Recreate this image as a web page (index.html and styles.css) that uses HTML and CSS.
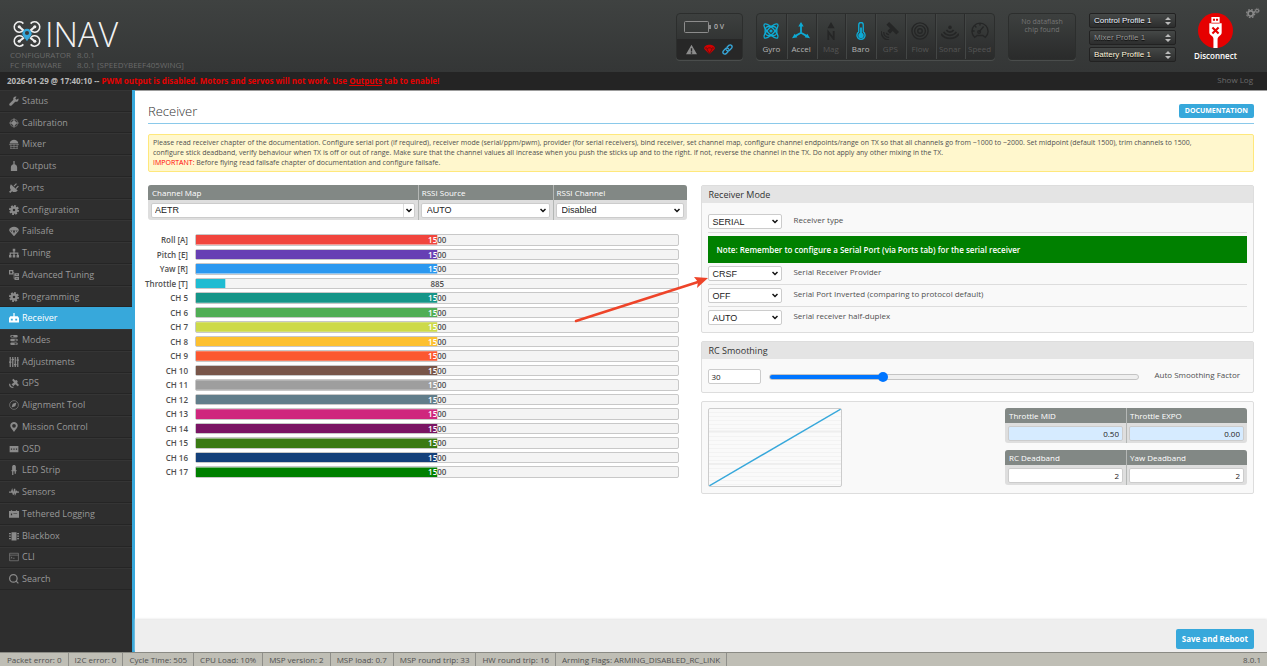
FILE: index.html
```
<!DOCTYPE html>
<html lang="en">
<head>
    <meta charset="UTF-8">
    <meta name="viewport" content="width=device-width, initial-scale=1.0">
    <title>INAV Configurator</title>
    <link rel="stylesheet" href="styles.css">
</head>
<body>
    <header class="header">
        <div class="brand">
            <div class="logo">
                <svg class="logo-mark" viewBox="0 0 54 54" fill="none" stroke="#eeeeee" stroke-width="3">
                    <path d="M20 7a10 10 0 1 0-1 14M34 7a10 10 0 1 1 1 14M20 47a10 10 0 1 1-1-14M34 47a10 10 0 1 0 1-14"/>
                    <path d="M12 13l9 8M42 13l-9 8M12 41l9-7M42 41l-9-7" stroke-width="4"/>
                    <circle cx="12" cy="13" r="3" fill="#eee" stroke="none"/>
                    <circle cx="42" cy="13" r="3" fill="#eee" stroke="none"/>
                    <circle cx="12" cy="41" r="3" fill="#eee" stroke="none"/>
                    <circle cx="42" cy="41" r="3" fill="#eee" stroke="none"/>
                    <path fill-rule="evenodd" d="M27 41c-5-8-9-10-9-15a9 9 0 0 1 18 0c0 5-4 7-9 15zM27 21a4 4 0 1 0 0 8 4 4 0 0 0 0-8z" fill="#37a8db" stroke="none"/>
                </svg>
                <span class="logo-text">INAV</span>
            </div>
            <dl class="versions">
                <dt>CONFIGURATOR</dt><dd>8.0.1</dd>
                <dt>FC FIRMWARE</dt><dd>8.0.1 [SPEEDYBEEF405WING]</dd>
            </dl>
        </div>

        <div class="battery-box">
            <div class="battery">
                <svg class="battery-icon" viewBox="0 0 27 12" fill="none" stroke="#8c8c8c"><rect x="0.500" y="0.500" width="24" height="11" rx="1"/><path d="M26 4v4" stroke-width="2"/></svg>
                <span>0 V</span>
            </div>
            <div class="battery-status">
                <svg viewBox="0 0 16 16" fill="#8c8c8c"><path fill-rule="evenodd" d="M8 1l8 14H0zM7 6v5h2V6zM7 12v2h2v-2z"/></svg>
                <svg viewBox="0 0 16 16"><path d="M0 7c0-8 16-8 16 0L8 15z" fill="#d40000"/><path d="M4 7l4 7 4-7M1 7c2-2 3-2 4 0 1-2 5-2 6 0 1-2 2-2 4 0" fill="none" stroke="#441515"/></svg>
                <svg viewBox="0 0 16 16" fill="none" stroke="#37a8db" stroke-width="2"><path d="M7 5l3-3c3-2 6 1 4 4l-3 3c-2 2-4 1-5-1M9 11l-3 3c-3 2-6-1-4-4l3-3c2-2 4-1 5 1"/></svg>
            </div>
        </div>

        <ul class="sensors">
            <li class="on"><svg viewBox="0 0 20 20" fill="none" stroke="currentColor" stroke-width="1.500"><ellipse cx="10" cy="10" rx="3.500" ry="10.500" transform="rotate(45 10 10)"/><ellipse cx="10" cy="10" rx="3.500" ry="10.500" transform="rotate(-45 10 10)"/><rect x="3.500" y="5" width="13" height="10" rx="4"/><circle cx="10" cy="10" r="1"/></svg>Gyro</li>
            <li class="on"><svg viewBox="0 0 20 20" fill="none" stroke="currentColor" stroke-width="2"><path d="M10 12V3M10 12l-7 4M10 12l7 4"/><path d="M10 0l3 5H7zM0 18l3-5 3 4zM20 18l-3-5-3 4z" fill="currentColor" stroke="none"/></svg>Accel</li>
            <li><svg viewBox="0 0 20 20" fill="none" stroke="currentColor" stroke-width="2"><path d="M10 0l4 7H6z" fill="currentColor" stroke="none"/><path d="M7 20v-9l6 8v-9"/></svg>Mag</li>
            <li class="on"><svg viewBox="0 0 20 20" fill="none" stroke="currentColor" stroke-width="1.500"><path d="M7.500 11V3a2.500 2.500 0 0 1 5 0v8a4.500 4.500 0 1 1-5 0z"/><circle cx="10" cy="15" r="3" fill="currentColor" stroke="none"/><path d="M10 15V6" stroke-width="2"/></svg>Baro</li>
            <li><svg viewBox="0 0 20 20" fill="currentColor"><path d="M9 0l4 4-3 3-4-4zM16 7l4 4-3 3-4-4zM13 4l3 3-6 6-3-3z"/><path d="M6 12c0 1 1 2 3 2M3 11c0 4 3 6 6 6M0 10c0 6 4 10 9 10" fill="none" stroke="currentColor" stroke-width="1.500"/></svg>GPS</li>
            <li><svg viewBox="0 0 20 20" fill="none" stroke="currentColor" stroke-width="1.500"><circle cx="10" cy="10" r="9"/><circle cx="10" cy="10" r="6"/><circle cx="10" cy="10" r="2.500"/></svg>Flow</li>
            <li><svg viewBox="0 0 20 20" fill="none" stroke="currentColor" stroke-width="2"><circle cx="10" cy="6" r="2" fill="currentColor" stroke="none"/><path d="M6 9c2 3 6 3 8 0M3 11c3 5 11 5 14 0M0 13c4 7 16 7 20 0"/></svg>Sonar</li>
            <li><svg viewBox="0 0 20 20" fill="none" stroke="currentColor" stroke-width="1.500"><path d="M4 17a9 9 0 1 1 12 0l-3-2H7zM9 11l5-6M10 1v3M1 10h3M4 4l2 2"/><circle cx="9" cy="11" r="1.500"/></svg>Speed</li>
        </ul>

        <div class="dataflash">No dataflash<br>chip found</div>

        <div class="profiles">
            <select aria-label="Control profile"><option>Control Profile 1</option></select>
            <select class="dim" aria-label="Mixer profile"><option>Mixer Profile 1</option></select>
            <select class="battery-profile" aria-label="Battery profile"><option>Battery Profile 1</option></select>
        </div>

        <button type="button" class="connect">
            <svg viewBox="0 0 34 34"><circle cx="17" cy="17" r="17" fill="#e60000"/><path d="M13 4h8v6h2v9c0 3-3 3-4 6v9h-4v-9c0-3-4-3-4-6v-9h2z" fill="#fff"/><path d="M14.500 5.500h2v2h-2zM17.500 5.500h2v2h-2zM13 9.500h8v.8h-8z" fill="#e60000"/><path d="M14 14l6 6M20 14l-6 6" stroke="#e60000" stroke-width="2"/></svg>
            Disconnect
        </button>

        <button type="button" class="options" aria-label="Options">
            <svg viewBox="0 0 24 18" fill="none" stroke="#888"><circle cx="8" cy="10" r="4.500" stroke-width="3"/><circle cx="8" cy="10" r="7" stroke-width="2" stroke-dasharray="3 2.500"/><circle cx="19" cy="5" r="2.500" stroke-width="2"/><circle cx="19" cy="5" r="4" stroke-dasharray="2 1"/></svg>
        </button>
    </header>

    <div class="log">
        <p>2026-01-29 @ 17:40:10 -- <span class="log-error">PWM output is disabled. Motors and servos will not work. Use <a href="#outputs">Outputs</a> tab to enable!</span></p>
        <a href="#log" class="show-log">Show Log</a>
    </div>

    <div class="main">
        <nav class="sidebar">
            <ul>
                <li><a href="#status"><svg viewBox="0 0 16 16"><path d="M15 4l-3 2-2-2 2-3c-4-1-6 2-5 5l-6 6c-2 2 1 5 3 3l6-6c3 1 6-1 5-5z"/></svg>Status</a></li>
                <li><a href="#calibration"><svg viewBox="0 0 16 16"><path d="M8 0v16M0 8h16" class="line"/><circle cx="8" cy="8" r="6" class="line"/><path d="M8 3L3 8l5 5 5-5z"/></svg>Calibration</a></li>
                <li><a href="#mixer"><svg viewBox="0 0 16 16"><path d="M1 7c1-8 13-8 14 0z"/><path d="M0 9h16M2 12h12M2 15h12M3 8v8M8 8v8M13 8v8" class="line"/></svg>Mixer</a></li>
                <li><a href="#outputs"><svg viewBox="0 0 16 16"><path d="M7 0h2v5c3 1 4 3 4 5v6H3v-6c0-2 1-4 4-5z"/></svg>Outputs</a></li>
                <li><a href="#ports"><svg viewBox="0 0 16 16"><path d="M3 2l11 10c-3 3-7 3-9 1l-3 3-2-2 3-3C1 9 1 5 3 2z"/><path d="M8 5l4-4M11 9l4-4" class="bold"/></svg>Ports</a></li>
                <li><a href="#configuration"><svg viewBox="0 0 16 16"><circle cx="8" cy="8" r="4" class="thick"/><circle cx="8" cy="8" r="6.500" class="teeth"/></svg>Configuration</a></li>
                <li><a href="#failsafe"><svg viewBox="0 0 16 16"><path d="M0 7c1-8 15-8 16 0z"/><path d="M1 7l7 8 7-8M5 7l3 8 3-8" class="bold"/></svg>Failsafe</a></li>
                <li><a href="#tuning"><svg viewBox="0 0 16 16"><path d="M6 1h4v4H6zM0 11h4v4H0zM6 11h4v4H6zM12 11h4v4h-4z"/><path d="M8 4v8M2 12V8h12v4" class="bold"/></svg>Tuning</a></li>
                <li><a href="#advanced"><svg viewBox="0 0 16 16"><path d="M1 1h5v5H1zM10 6h5v3h-5zM10 12h5v3h-5z" class="bold"/><path d="M6 4h2v10h2M8 8h2" class="line"/></svg>Advanced Tuning</a></li>
                <li><a href="#programming"><svg viewBox="0 0 16 16"><circle cx="8" cy="8" r="4" class="thick"/><circle cx="8" cy="8" r="6.500" class="teeth"/></svg>Programming</a></li>
                <li class="active"><a href="#receiver"><svg viewBox="0 0 16 16"><path fill-rule="evenodd" d="M7 0h2v5h5l2 3v7H0V8l2-3h5zM3 9v3h3V9zM10 9v3h3V9z"/></svg>Receiver</a></li>
                <li><a href="#modes"><svg viewBox="0 0 16 16"><path fill-rule="evenodd" d="M4 0h8a2 2 0 0 1 0 4H4a2 2 0 0 1 0-4zM4 6h8a2 2 0 0 1 0 4H4a2 2 0 0 1 0-4zM4 12h8a2 2 0 0 1 0 4H4a2 2 0 0 1 0-4zM4 1v2h3V1zM9 7v2h3V7zM9 13v2h3v-2z"/></svg>Modes</a></li>
                <li><a href="#adjustments"><svg viewBox="0 0 16 16"><path d="M2 0v16M6 0v16M10 0v16M14 0v16M0 8h4M4 4h4M8 12h4M12 5h4" class="bold"/></svg>Adjustments</a></li>
                <li><a href="#gps"><svg viewBox="0 0 16 16"><path d="M7 1l3 3 2-1 2 2-1 3 3 3-2 2-4-3-3 3-3-3 4-3-3-4z"/><path d="M1 9c0 4 2 6 6 6" class="bold"/></svg>GPS</a></li>
                <li><a href="#alignment"><svg viewBox="0 0 16 16"><circle cx="8" cy="8" r="7" class="line"/><path d="M12 4l-2 6-6 2 2-6z"/></svg>Alignment Tool</a></li>
                <li><a href="#mission"><svg viewBox="0 0 16 16"><path fill-rule="evenodd" d="M8 16C5 11 2 9 2 6c0-8 12-8 12 0 0 3-3 5-6 10zM8 3a3 3 0 1 0 0 6 3 3 0 0 0 0-6z"/></svg>Mission Control</a></li>
                <li><a href="#osd"><svg viewBox="0 0 16 16"><path fill-rule="evenodd" d="M1 3h14v10H1zM3 7v2h2V7zM7 7v2h2V7zM11 7v2h2V7z"/></svg>OSD</a></li>
                <li><a href="#led"><svg viewBox="0 0 16 16"><path d="M5 8V3c0-4 6-4 6 0v5h1v2H4V8z"/><path d="M6 9v7M10 9v5" class="bold"/></svg>LED Strip</a></li>
                <li><a href="#sensors"><svg viewBox="0 0 16 16"><path d="M0 8h4l1-3 2 7 2-9 1 8 2-4 1 1h3" class="bold"/></svg>Sensors</a></li>
                <li><a href="#logging"><svg viewBox="0 0 16 16"><path fill-rule="evenodd" d="M0 3h3V2h2v1h6V2h2v1h3v11H0zM3 7v3h2V7zM7 7v1h6V7z"/></svg>Tethered Logging</a></li>
                <li><a href="#blackbox"><svg viewBox="0 0 16 16"><path d="M4 2h8v13H4zM0 3h3v2H0zM0 7h3v2H0zM0 11h3v2H0zM13 3h3v2h-3zM13 7h3v2h-3zM13 11h3v2h-3z"/></svg>Blackbox</a></li>
                <li><a href="#cli"><svg viewBox="0 0 16 16"><path d="M1 2h14v12H1zM1 5h14M3 8l2 1-2 1M6 10h3" class="line"/></svg>CLI</a></li>
                <li><a href="#search"><svg viewBox="0 0 16 16"><circle cx="7" cy="7" r="6" class="bold"/><path d="M11 11l4 4" class="bold"/></svg>Search</a></li>
            </ul>
        </nav>

        <main class="content">
            <div class="tab">
                <div class="tab-title">
                    <h1>Receiver</h1>
                    <a href="#docs" class="doc-button">Documentation</a>
                </div>

                <div class="note">
                    Please read receiver chapter of the documentation. Configure serial port (if required), receiver mode (serial/ppm/pwm), provider (for serial receivers), bind receiver, set channel map, configure channel endpoints/range on TX so that all channels go from ~1000 to ~2000. Set midpoint (default 1500), trim channels to 1500, configure stick deadband, verify behaviour when TX is off or out of range. Make sure that the channel values all increase when you push the sticks up and to the right. If not, reverse the channel in the TX. Do not apply any other mixing in the TX.<br>
                    <span class="important">IMPORTANT:</span> Before flying read failsafe chapter of documentation and configure failsafe.
                </div>

                <div class="columns">
                    <section>
                        <table class="fields">
                            <thead>
                                <tr>
                                    <th class="map"><label for="channelMap">Channel Map</label></th>
                                    <th><label for="rssiSource">RSSI Source</label></th>
                                    <th><label for="rssiChannel">RSSI Channel</label></th>
                                </tr>
                            </thead>
                            <tbody>
                                <tr>
                                    <td><select id="channelMap" class="split"><option>AETR</option></select></td>
                                    <td><select id="rssiSource"><option>AUTO</option></select></td>
                                    <td><select id="rssiChannel"><option>Disabled</option></select></td>
                                </tr>
                            </tbody>
                        </table>
                        <div class="bars" id="bars"></div>
                    </section>

                    <section class="settings">
                        <div class="panel">
                            <h2>Receiver Mode</h2>
                            <div class="panel-body">
                                <div class="row">
                                    <select id="receiverType"><option>SERIAL</option></select>
                                    <label for="receiverType">Receiver type</label>
                                </div>
                                <p class="serial-note">Note: Remember to configure a Serial Port (via Ports tab) for the serial receiver</p>
                                <div class="row">
                                    <select id="provider"><option>CRSF</option></select>
                                    <label for="provider">Serial Receiver Provider</label>
                                </div>
                                <div class="row">
                                    <select id="inverted"><option>OFF</option></select>
                                    <label for="inverted">Serial Port Inverted (comparing to protocol default)</label>
                                </div>
                                <div class="row">
                                    <select id="halfDuplex"><option>AUTO</option></select>
                                    <label for="halfDuplex">Serial receiver half-duplex</label>
                                </div>
                            </div>
                        </div>

                        <div class="panel">
                            <h2>RC Smoothing</h2>
                            <div class="panel-body smoothing">
                                <input type="text" id="smoothing" value="30">
                                <input type="range" min="0" max="100" value="30" aria-label="Smoothing factor">
                                <label for="smoothing">Auto Smoothing Factor</label>
                            </div>
                        </div>

                        <div class="panel curve">
                            <svg class="plot" viewBox="0 0 132 78" preserveAspectRatio="none"><path d="M0 22.500h132M0 55.500h132" stroke="#e8e8e8"/><path d="M0 78L132 0" stroke="#37a8db" stroke-width="1.500"/></svg>
                            <div class="curve-fields">
                                <table class="fields">
                                    <thead><tr><th><label for="mid">Throttle MID</label></th><th><label for="expo">Throttle EXPO</label></th></tr></thead>
                                    <tbody><tr><td><input type="text" class="blue" id="mid" value="0.50"></td><td><input type="text" class="blue" id="expo" value="0.00"></td></tr></tbody>
                                </table>
                                <table class="fields">
                                    <thead><tr><th><label for="deadband">RC Deadband</label></th><th><label for="yawDeadband">Yaw Deadband</label></th></tr></thead>
                                    <tbody><tr><td><input type="text" id="deadband" value="2"></td><td><input type="text" id="yawDeadband" value="2"></td></tr></tbody>
                                </table>
                            </div>
                        </div>
                    </section>

                    <svg class="arrow" viewBox="0 0 136 50"><path d="M2 46L124 7" stroke="#ee4429" stroke-width="2.500" stroke-linecap="round"/><path d="M134 3l-11 10 1-6-4-5z" fill="#ee4429"/></svg>
                </div>
            </div>

            <div class="toolbar">
                <button type="button" class="save">Save and Reboot</button>
            </div>
        </main>
    </div>

    <footer class="status-bar">
        <span>Packet error: 0</span>
        <span>I2C error: 0</span>
        <span>Cycle Time: 505</span>
        <span>CPU Load: 10%</span>
        <span>MSP version: 2</span>
        <span>MSP load: 0.7</span>
        <span>MSP round trip: 33</span>
        <span>HW round trip: 16</span>
        <span>Arming Flags: ARMING_DISABLED_RC_LINK</span>
        <span class="version">8.0.1</span>
    </footer>

    <script>
        const channels = [
            ['Roll [A]', 1500, '#f1453d'],
            ['Pitch [E]', 1500, '#673fb4'],
            ['Yaw [R]', 1500, '#2b98f0'],
            ['Throttle [T]', 885, '#1fbcd2'],
            ['CH 5', 1500, '#159588'],
            ['CH 6', 1500, '#50ae55'],
            ['CH 7', 1500, '#cdda49'],
            ['CH 8', 1500, '#fdc02f'],
            ['CH 9', 1500, '#fc5830'],
            ['CH 10', 1500, '#785549'],
            ['CH 11', 1500, '#9e9e9e'],
            ['CH 12', 1500, '#617d8a'],
            ['CH 13', 1500, '#cf267d'],
            ['CH 14', 1500, '#7a1464'],
            ['CH 15', 1500, '#3a7a14'],
            ['CH 16', 1500, '#14407a'],
            ['CH 17', 1500, '#008000']
        ];
        const min = 800;
        const max = 2200;

        // the white value is clipped by the fill, the dark one lies under it
        document.getElementById('bars').innerHTML = channels.map(([name, value, color]) => {
            const right = 100 - (value - min) / (max - min) * 100;
            return `<div class="name">${name}</div>
                <div class="meter">
                    <span class="value">${value}</span>
                    <span class="fill" style="background-color: ${color}; clip-path: inset(0 ${right}% 0 0)">${value}</span>
                </div>`;
        }).join('');
    </script>
</body>
</html>
```
FILE: styles.css
```
* {
    box-sizing: border-box;
}
body {
    display: flex;
    flex-direction: column;
    min-height: 100vh;
    margin: 0;
    font-family: "Open Sans", sans-serif;
    font-size: 8px;
    line-height: 10px;
    color: #4f4f4f;
    background-color: #fff;
}
ul, dl, dd, p, h1, h2 {
    margin: 0;
    padding: 0;
    list-style: none;
}
button {
    border: 0;
    padding: 0;
    background: none;
    font-family: inherit;
    cursor: pointer;
}
.header {
    display: flex;
    align-items: flex-start;
    gap: 13px;
    height: 72px;
    padding: 13px 7px 0 10px;
    background: linear-gradient(#3f4241, #343636);
}
.brand {
    flex: 1;
    padding-top: 4px;
}
.logo {
    display: flex;
    align-items: center;
    gap: 4px;
    height: 33px;
    padding-left: 3px;
}
.logo-mark {
    width: 28px;
    height: 28px;
}
.logo-text {
    font-size: 34px;
    line-height: 32px;
    font-weight: 300;
    color: #f2f2f2;
}
.versions {
    display: grid;
    grid-template-columns: 67px auto;
    color: #6a6a6a;
}
.battery-box, .sensors, .dataflash {
    height: 47px;
    border: 1px solid #2c2e2d;
    border-radius: 4px;
    background: linear-gradient(#3d403f, #2a2b2b);
    box-shadow: 0 1px 0 #4a4d4c;
}
.battery-box {
    width: 67px;
}
.battery {
    display: flex;
    align-items: center;
    gap: 3px;
    height: 25px;
    padding-left: 7px;
    font-size: 7px;
    font-weight: 600;
    color: #b0b0b0;
}
.battery-icon {
    width: 27px;
    height: 12px;
}
.battery-status {
    display: flex;
    align-items: center;
    justify-content: space-between;
    height: 20px;
    padding: 0 9px;
    background-color: #272727;
}
.battery-status svg {
    width: 11px;
    height: 11px;
}
.sensors {
    display: flex;
    width: 239px;
    color: #555;
}
.sensors li {
    display: flex;
    flex: 1;
    flex-direction: column;
    align-items: center;
    gap: 4px;
    padding-top: 8px;
    border-right: 1px solid #2b2c2c;
    box-shadow: 1px 0 0 #434645;
}
.sensors li:last-child {
    border-right: 0;
    box-shadow: none;
}
.sensors li.on {
    color: #b5b5b5;
}
.sensors svg {
    width: 18px;
    height: 18px;
    color: #252626;
}
.sensors .on svg {
    color: #0eaad4;
}
.dataflash {
    width: 68px;
    padding-top: 4px;
    font-size: 7px;
    line-height: 8px;
    text-align: center;
    color: #757575;
}
.profiles {
    display: flex;
    flex-direction: column;
    gap: 2px;
    width: 87px;
}
.profiles select {
    appearance: none;
    height: 15px;
    padding: 0 4px;
    border: 1px solid #222;
    border-radius: 2px;
    background: url("data:image/svg+xml,%3Csvg xmlns='http://www.w3.org/2000/svg' width='6' height='8'%3E%3Cpath d='M0 3l3-3 3 3zM0 5l3 3 3-3z' fill='%23bbb'/%3E%3C/svg%3E") no-repeat right 4px center, linear-gradient(#454847, #2d2e2e);
    font-family: "Liberation Sans", sans-serif;
    font-size: 8px;
    color: #eef4ff;
    text-shadow: 0 1px 1px #000;
}
.profiles select.dim {
    color: #999;
}
.profiles select.battery-profile {
    color: #fff5dc;
}
.connect {
    display: flex;
    flex-direction: column;
    align-items: center;
    gap: 3px;
    width: 53px;
    font-size: 8px;
    line-height: 10px;
    font-weight: 600;
    color: #fff;
}
.connect svg {
    width: 35px;
    height: 35px;
}
.options {
    margin: -6px 0 0 -9px;
}
.options svg {
    display: block;
    width: 14px;
    height: 12px;
}
.log {
    display: flex;
    justify-content: space-between;
    height: 18px;
    padding: 0 14px 0 7px;
    line-height: 18px;
    background-color: #242424;
    color: #b8b8b8;
    font-weight: 700;
}
.log-error, .log-error a {
    color: #e60000;
}
.log .show-log {
    font-weight: 400;
    line-height: 16px;
    color: #6b6b6b;
    text-decoration: none;
}
.main {
    display: flex;
    flex: 1;
}
.sidebar {
    width: 135px;
    border-right: 3px solid #37a8db;
    background-color: #2e2e2e;
}
.sidebar ul {
    display: grid;
    grid-auto-rows: 1fr;
    height: 500px;
}
.sidebar li {
    display: flex;
    border-top: 1px solid #353535;
    border-bottom: 1px solid #252525;
}
.sidebar a {
    display: flex;
    flex: 1;
    align-items: center;
    gap: 3px;
    padding-left: 9px;
    font-size: 9px;
    color: #999;
    text-decoration: none;
}
.sidebar svg {
    width: 10px;
    height: 10px;
    fill: #8a8a8a;
    stroke: none;
}
.sidebar .line, .sidebar .bold, .sidebar .thick, .sidebar .teeth {
    fill: none;
    stroke: #8a8a8a;
    stroke-width: 1;
}
.sidebar .bold {
    stroke-width: 2;
}
.sidebar .thick {
    stroke-width: 4;
}
.sidebar .teeth {
    stroke-width: 3;
    stroke-dasharray: 3 2;
}
.sidebar .active {
    border-color: #37a8db;
    background-color: #37a8db;
}
.sidebar .active a {
    color: #fff;
}
.sidebar .active svg {
    fill: #fff;
}
.content {
    display: flex;
    flex: 1;
    flex-direction: column;
    border-top: 1px solid #9c9c9c;
}
.tab {
    flex: 1;
    padding: 11px 13px 0;
}
.tab-title {
    display: flex;
    align-items: center;
    justify-content: space-between;
    height: 22px;
    padding-bottom: 3px;
    border-bottom: 1px solid #8ac9ea;
}
h1 {
    font-size: 13px;
    line-height: 18px;
    font-weight: 300;
    color: #333;
}
.doc-button, .save {
    border-radius: 2px;
    background-color: #37a8db;
    font-weight: 700;
    color: #fff;
    text-decoration: none;
}
.doc-button {
    padding: 0 6px;
    font-size: 7px;
    line-height: 14px;
    text-transform: uppercase;
}
.note {
    margin: 10px 0 13px;
    padding: 3px 36px 3px 4px;
    border: 1px solid #ffe87c;
    border-radius: 2px;
    background-color: #fff7cd;
    font-size: 7px;
}
.important {
    color: red;
}
.columns {
    position: relative;
    display: grid;
    grid-template-columns: 539fr 552fr;
    gap: 14px;
}
.fields {
    width: 100%;
    table-layout: fixed;
    border-collapse: separate;
    border-spacing: 0;
    border-radius: 3px;
    background-color: #dedede;
    overflow: hidden;
}
.fields .map {
    width: 50%;
}
.fields th {
    height: 15px;
    padding: 0 4px;
    background-color: #828885;
    font-weight: 400;
    text-align: left;
    color: #fff;
}
.fields td {
    height: 20px;
    padding: 2px 3px;
}
.fields th + th, .fields td + td {
    border-left: 1px solid #b4b7b5;
}
.fields th + th {
    padding-left: 3px;
}
.fields td + td {
    padding-left: 2px;
}
.fields select, .fields input, .row select, .smoothing input[type="text"] {
    display: block;
    width: 100%;
    height: 15px;
    border: 1px solid #ccc;
    border-radius: 2px;
    background-color: #fff;
    color: #222;
}
.fields select, .row select {
    appearance: none;
    padding: 0 3px;
    background-image: url("data:image/svg+xml,%3Csvg xmlns='http://www.w3.org/2000/svg' width='6' height='5'%3E%3Cpath d='M.5 1l2.500 2.500 2.500-2.500' fill='none' stroke='%23111' stroke-width='1.500'/%3E%3C/svg%3E");
    background-repeat: no-repeat;
    background-position: right 3px center;
    font-family: "Liberation Sans", sans-serif;
    font-size: 9px;
}
.fields td + td select {
    padding-left: 5px;
}
.fields .split {
    background-image: url("data:image/svg+xml,%3Csvg xmlns='http://www.w3.org/2000/svg' width='11' height='15'%3E%3Cpath d='M.5 0v15' stroke='%23ddd'/%3E%3Cpath d='M3.500 6l2.500 2.500 2.500-2.500' fill='none' stroke='%23111' stroke-width='1.500'/%3E%3C/svg%3E");
    background-position: right 0 center;
}
.fields input {
    padding: 0 3px;
    font-family: inherit;
    font-size: 8px;
    text-align: right;
}
.fields input.blue {
    background-color: #d6ebff;
}
.bars {
    display: grid;
    grid-template-columns: 40px 1fr;
    grid-auto-rows: 1fr;
    gap: 3px 7px;
    height: 244px;
    margin: 14px 8px 0 0;
}
.name {
    justify-self: end;
    line-height: 11px;
    font-weight: 600;
    white-space: nowrap;
}
.meter {
    position: relative;
    border: 1px solid #c8c8c8;
    border-radius: 2px;
    background-color: #f4f4f4;
    line-height: 10px;
    font-weight: 600;
    text-align: center;
}
.value, .fill {
    position: absolute;
    inset: 0;
}
.fill {
    color: #fff;
}
.settings {
    display: flex;
    flex-direction: column;
    gap: 8px;
}
.panel {
    border: 1px solid #ddd;
    border-radius: 2px;
    background-color: #f9f9f9;
}
.panel h2 {
    padding: 0 6px;
    background-color: #e4e4e4;
    font-size: 9px;
    line-height: 17px;
    font-weight: 400;
    color: #333;
}
.panel-body {
    padding: 8px 6px 4px;
}
.row {
    display: flex;
    gap: 11px;
    padding: 3px 0;
    border-bottom: 1px solid #ddd;
}
.row:last-child {
    border-bottom: 0;
}
.row select {
    width: 74px;
}
.row label {
    line-height: 12px;
}
.serial-note {
    margin-top: 3px;
    padding: 0 8px;
    background-color: #008000;
    line-height: 27px;
    font-size: 8px;
    font-weight: 600;
    color: #fff;
}
.panel-body.smoothing {
    display: flex;
    align-items: flex-start;
    gap: 8px;
    padding: 10px 13px 8px 6px;
}
.smoothing input[type="text"] {
    width: 53px;
    padding: 0 2px;
    font-family: inherit;
    font-size: 8px;
}
.smoothing input[type="range"] {
    appearance: none;
    flex: 1;
    height: 6px;
    margin: 5px 7px 0 0;
    border: 1px solid #c4c4c4;
    border-radius: 3px;
    background: linear-gradient(to right, #0075ff 30%, #efefef 30%);
}
.smoothing input[type="range"]::-webkit-slider-thumb {
    appearance: none;
    width: 10px;
    height: 10px;
    border-radius: 50%;
    background-color: #0075ff;
}
.smoothing label {
    line-height: 12px;
}
.curve {
    display: flex;
    justify-content: space-between;
    padding: 6px;
}
.plot {
    width: 134px;
    height: 79px;
    border: 1px solid #ccc;
    border-radius: 2px;
    background: repeating-linear-gradient(#fafafa 0 3px, #f3f3f3 3px 4px);
}
.curve-fields {
    display: grid;
    align-content: start;
    gap: 7px;
    width: 242px;
}
.arrow {
    position: absolute;
    left: 426px;
    top: 90px;
    width: 136px;
    height: 50px;
}
.toolbar {
    display: flex;
    justify-content: flex-end;
    padding: 9px 13px 3px;
    background-color: #eee;
    box-shadow: 0 -1px 2px #e4e4e4;
}
.save {
    padding: 0 6px;
    font-size: 8px;
    line-height: 20px;
}
.status-bar {
    display: flex;
    height: 14px;
    padding-left: 1px;
    border-top: 1px solid #8a8a84;
    background-color: #bfbeb5;
    line-height: 14px;
}
.status-bar span {
    padding: 0 6px;
    border-right: 1px solid #8f8f8a;
}
.status-bar .version {
    margin-left: auto;
    border-right: 0;
}
```
